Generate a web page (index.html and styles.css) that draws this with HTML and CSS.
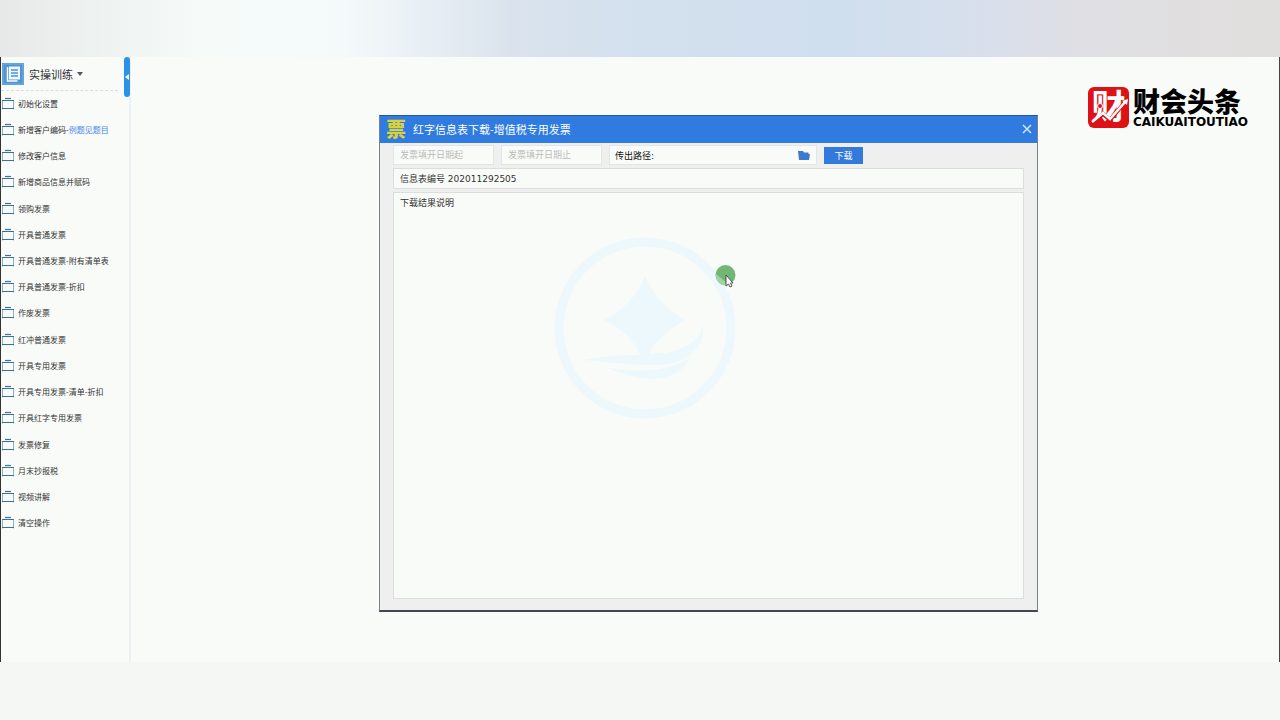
FILE: index.html
```
<!DOCTYPE html>
<html lang="zh-CN">
<head>
<meta charset="utf-8">
<title>实操训练</title>
<link rel="stylesheet" href="styles.css">
</head>
<body>
<svg class="defs" aria-hidden="true">
  <symbol id="box" viewBox="0 0 12 13">
    <path d="M3 1.5h6" stroke="#3f6f96" stroke-width="1.2"/>
    <path d="M.5 4v8.500M11.500 4v8.500" stroke="#86b4d6" stroke-width="1"/>
    <path d="M0 3.500h12M0 11.500h12" stroke="#3f6f96" stroke-width="1"/>
  </symbol>
</svg>
<div class="band band-top"></div>
<div class="app">
  <aside class="sidebar">
    <button class="sidebar-head" type="button">
      <svg class="book" viewBox="0 0 22 22"><rect width="22" height="22" fill="#4f95d3"/><rect x="1" y="1" width="20" height="20" fill="none" stroke="#79b3e2"/><path d="M5.500 4v14h10" fill="none" stroke="#fff" stroke-width="1.500"/><rect x="7" y="3.500" width="11" height="13" fill="#eef7fd"/><path d="M9 7h7M9 10h7M9 13h7" stroke="#4f95d3" stroke-width="1.300"/></svg>
      <span>实操训练</span>
      <svg class="caret" viewBox="0 0 6 4"><path d="M0 0h6L3 4z" fill="#555"/></svg>
    </button>
    <button class="handle" type="button" aria-label="收起"><svg viewBox="0 0 4 6"><path d="M4 0v6L0 3z" fill="#fff"/></svg></button>
    <ul class="menu">
      <li><svg><use href="#box"/></svg><span>初始化设置</span></li>
      <li><svg><use href="#box"/></svg><span>新增客户编码-<a href="#">例题见题目</a></span></li>
      <li><svg><use href="#box"/></svg><span>修改客户信息</span></li>
      <li><svg><use href="#box"/></svg><span>新增商品信息并赋码</span></li>
      <li><svg><use href="#box"/></svg><span>领购发票</span></li>
      <li><svg><use href="#box"/></svg><span>开具普通发票</span></li>
      <li><svg><use href="#box"/></svg><span>开具普通发票-附有清单表</span></li>
      <li><svg><use href="#box"/></svg><span>开具普通发票-折扣</span></li>
      <li><svg><use href="#box"/></svg><span>作废发票</span></li>
      <li><svg><use href="#box"/></svg><span>红冲普通发票</span></li>
      <li><svg><use href="#box"/></svg><span>开具专用发票</span></li>
      <li><svg><use href="#box"/></svg><span>开具专用发票-清单-折扣</span></li>
      <li><svg><use href="#box"/></svg><span>开具红字专用发票</span></li>
      <li><svg><use href="#box"/></svg><span>发票修复</span></li>
      <li><svg><use href="#box"/></svg><span>月末抄报税</span></li>
      <li><svg><use href="#box"/></svg><span>视频讲解</span></li>
      <li><svg><use href="#box"/></svg><span>清空操作</span></li>
    </ul>
  </aside>
  <main class="main">
    <section class="dialog">
      <header class="dialog-head">
        <span class="ticket">票</span>
        <h1>红字信息表下载-增值税专用发票</h1>
        <button class="close" type="button" aria-label="关闭"><svg viewBox="0 0 10 10"><path d="M1 1l8 8M9 1L1 9" stroke="#d9ecff" stroke-width="1.400"/></svg></button>
      </header>
      <div class="dialog-body">
        <div class="filters">
          <input type="text" placeholder="发票填开日期起" aria-label="发票填开日期起">
          <input type="text" placeholder="发票填开日期止" aria-label="发票填开日期止">
          <div class="path">
            <input type="text" value="传出路径:" aria-label="传出路径">
            <svg viewBox="0 0 12 10"><path d="M0 1h5l1 1.500h4.500V4H12l-1 6H1z" fill="#3d79cf"/></svg>
          </div>
          <button class="download" type="button">下载</button>
        </div>
        <input class="number" type="text" value="信息表编号 202011292505" aria-label="信息表编号">
        <div class="result">
          <textarea aria-label="下载结果说明">下载结果说明</textarea>
          <svg class="watermark" viewBox="0 0 182 182" fill="#ecf8fc">
            <circle cx="91" cy="91" r="86" fill="none" stroke="#ecf8fc" stroke-width="9"/>
            <path d="M91 40C100 59 112 73 132 83C113 93 101 104 95 117L111 116C132 112 148 103 149 86C152 113 130 128 103 128C77 128 52 125 29 123C49 119 67 118 86 118C80 102 66 90 50 83C69 74 83 59 91 40z"/>
            <path d="M54 131C82 135 111 136 136 121C126 140 104 145 84 140C72 138 64 135 54 131z"/>
          </svg>
        </div>
      </div>
    </section>
  </main>
  <div class="brand">
    <div class="seal"><span>财</span><svg viewBox="0 0 41 41"><path d="M5 36L15 27L22 33L38 14" fill="none" stroke="#dd1116" stroke-width="4"/><path d="M4 35L15 26L22 32L38 14" fill="none" stroke="#fff" stroke-width="2.500"/><path d="M34 14l6-2-1 6z" fill="#fff"/><circle cx="12" cy="19" r="2.500" fill="#dd1116" stroke="#fff"/></svg></div>
    <div class="brand-text"><strong>财会头条</strong><span>CAIKUAITOUTIAO</span></div>
  </div>
  <svg class="pointer" viewBox="0 0 22 24"><circle cx="10.500" cy="10" r="10" fill="#72b674"/><path d="M1 9l13 11a10 10 0 0 1-13-11z" fill="#a5d0a5"/><path d="M11 10v11l2.500-2 1.500 3 2-1-1.500-3h2.500z" fill="#fff" stroke="#444" stroke-width=".9"/></svg>
</div>
<div class="band band-bottom"></div>
</body>
</html>
```
FILE: styles.css
```
* { box-sizing: border-box; }
body {
  margin: 0;
  min-height: 100vh;
  display: flex;
  flex-direction: column;
  background: #f9fbf9;
  color: #333;
  font-family: "DejaVu Sans", "Noto Sans CJK SC", sans-serif;
}
button, input, textarea { font: inherit; color: inherit; }
button { border: 0; padding: 0; background: none; }
.defs { position: absolute; width: 0; height: 0; }

.band-top {
  height: 57px;
  background: linear-gradient(90deg, #e6e9e8 0, #f6fbfa 16%, #f4f9fa 27%, #dae3ed 40%, #d3e0ee 50%, #d0dfee 66%, #d8dfec 77%, #e0dfe3 85%, #e1dfdd 100%);
}
.band-bottom { height: 58px; background: #f5f7f5; }

.app {
  position: relative;
  flex: 1;
  display: flex;
  border-left: 1px solid #333;
  border-right: 1px solid #444;
}

.sidebar {
  position: relative;
  flex: none;
  width: 130px;
  border-right: 2px solid #edf0f4;
}
.sidebar-head {
  display: flex;
  align-items: center;
  width: 117px;
  height: 34px;
  padding-left: 1px;
  border-bottom: 1px dashed #ddd;
  font-size: 11px;
}
.book { width: 22px; height: 22px; margin-right: 5px; }
.caret { width: 6px; height: 4px; margin-left: 4px; }
.handle {
  position: absolute;
  top: 0;
  right: -1px;
  width: 6px;
  height: 40px;
  border-radius: 3px;
  background: #2a93e6;
}
.handle svg { display: block; width: 4px; height: 6px; margin: 0 auto; }
.menu {
  display: grid;
  grid-auto-rows: 1fr;
  min-height: 446px;
  margin: -1px 0 0;
  padding: 0;
  list-style: none;
  font-family: "Noto Sans CJK SC", sans-serif;
  font-size: 8px;
  white-space: nowrap;
}
.menu li { display: flex; align-items: center; gap: 4px; padding-left: 1px; }
.menu svg { width: 12px; height: 13px; }
.menu a { color: #4a86e8; text-decoration: none; }

.main { flex: 1; display: flex; padding: 58px 241px 50px 248px; }
.dialog {
  flex: 1;
  display: flex;
  flex-direction: column;
  border: 1px solid #7c8088;
  border-top-color: #28559b;
  border-bottom: 2px solid #444750;
  background: #efeff0;
}
.dialog-head {
  display: flex;
  align-items: center;
  height: 27px;
  padding: 0 5px 2px 6px;
  background: #2f7be0;
  color: #fff;
  font-family: "Noto Sans CJK SC", sans-serif;
}
.ticket { font-size: 20px; line-height: 24px; font-weight: 900; color: #d9d03a; }
.dialog-head h1 { flex: 1; margin: 0 0 0 7px; font-size: 11px; line-height: 16px; font-weight: 400; }
.close { width: 10px; height: 10px; }
.close svg { display: block; }
.dialog-body {
  flex: 1;
  display: flex;
  flex-direction: column;
  gap: 3px;
  padding: 2px 13px 11px;
  font-size: 9px;
}
.filters { display: grid; grid-template-columns: 101px 101px 208px 39px; gap: 7px; align-items: center; }
.filters input, .number, .path {
  width: 100%;
  min-width: 0;
  height: 20px;
  padding: 0 6px;
  border: 1px solid #e4e5e5;
  background: #f9fbf9;
}
.filters input::placeholder { color: #b9bbbb; opacity: 1; }
.path { display: flex; align-items: center; }
.filters .path input { flex: 1; height: 18px; padding: 0; border: 0; color: #111; }
.path svg { width: 12px; height: 10px; }
.filters .path { padding: 0 6px 0 5px; }
.download { height: 17px; background: #3279dc; color: #fff; }
.number { height: 21px; border-color: #dcdddd; }
.result { position: relative; flex: 1; display: flex; }
.result textarea {
  flex: 1;
  min-width: 0;
  resize: none;
  padding: 3px 6px;
  border: 1px solid #dcdddd;
  background: #f9fbf9;
}
.watermark { position: absolute; left: 161px; top: 45px; width: 182px; height: 182px; pointer-events: none; }

.brand { position: absolute; top: 30px; right: 31px; display: flex; gap: 4px; color: #000; font-family: "Noto Sans CJK SC", sans-serif; }
.seal { position: relative; width: 41px; height: 41px; border-radius: 6px; background: #dd1116; }
.seal span { display: block; font-size: 34px; line-height: 36px; text-align: center; font-weight: 700; color: #fff; }
.seal svg { position: absolute; inset: 0; }
.brand-text { display: flex; flex-direction: column; }
.brand-text strong { font-size: 27px; line-height: 27px; font-weight: 900; }
.brand-text span { font-family: "DejaVu Sans", sans-serif; font-size: 12px; line-height: 16px; font-weight: 700; }
.pointer { position: absolute; left: 714px; top: 208px; width: 22px; height: 24px; pointer-events: none; }
```
